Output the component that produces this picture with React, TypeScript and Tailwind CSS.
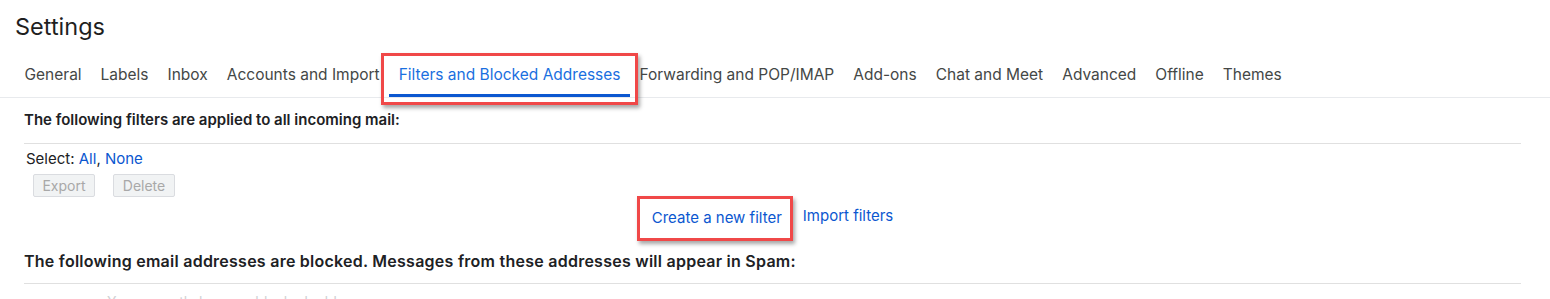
import React from "react";

const tabs = [
  "General",
  "Labels",
  "Inbox",
  "Accounts and Import",
  "Filters and Blocked Addresses",
  "Forwarding and POP/IMAP",
  "Add-ons",
  "Chat and Meet",
  "Advanced",
  "Offline",
  "Themes",
];

const ACTIVE = "Filters and Blocked Addresses";

const App: React.FC = () => {
  return (
    <div className="h-[299px] overflow-hidden bg-white font-['Inter',sans-serif] text-[#202124]">
      {/* Title */}
      <h1 className="pl-[15px] pt-[12px] text-[23.5px] leading-[30px] font-normal text-[#1f1f1f]">
        Settings
      </h1>

      {/* Tabs */}
      <div className="mt-[17px] flex border-b border-[#e8eaed] pl-[15px]">
        {tabs.map((t) => {
          const active = t === ACTIVE;
          return (
            <div key={t} className="relative">
              <button
                className={
                  active
                    ? "h-[38px] border-b-[3px] border-[#0b57d0] px-[9.5px] pb-[3px] text-[15.5px] text-[#1a6fe0]"
                    : "h-[38px] border-b-[3px] border-transparent px-[9.5px] pb-[3px] text-[15.5px] text-[#444746]"
                }
              >
                {t}
              </button>
              {active && (
                <span className="pointer-events-none absolute -left-[8px] -right-[8px] -top-[6px] bottom-[-8px] border-[3px] border-[#f04848] shadow-[2px_3px_4px_rgba(0,0,0,0.35)]" />
              )}
            </div>
          );
        })}
      </div>

      {/* Filters section */}
      <div className="pl-[24px] pr-[29px] text-[15px]">
        <div className="flex h-[46px] items-center border-b border-[#e0e0e0] font-semibold text-[#202124]">
          The following filters are applied to all incoming mail:
        </div>
        <div className="pl-[2px] pt-[5px] leading-[20px] text-[#202124]">
          Select: <a className="text-[#0b57d0]">All</a>,{" "}
          <a className="text-[#0b57d0]">None</a>
        </div>
        <div className="mt-[5px] flex gap-[18px] pl-[9px]">
          <button className="h-[23px] w-[62px] rounded-[2px] border border-[#dadce0] bg-[#f1f3f4] text-[14px] text-[#a8a8a8]">
            Export
          </button>
          <button className="h-[23px] w-[62px] rounded-[2px] border border-[#dadce0] bg-[#f1f3f4] text-[14px] text-[#a8a8a8]">
            Delete
          </button>
        </div>
        <div className="mt-[10px] flex justify-center gap-[21px] text-[#0b57d0]">
          <div className="relative">
            <a className="leading-[18px]">Create a new filter</a>
            <span className="pointer-events-none absolute -left-[15px] -right-[11px] -top-[11px] -bottom-[11px] border-[3px] border-[#f04848] shadow-[2px_3px_4px_rgba(0,0,0,0.35)]" />
          </div>
          <a className="leading-[18px]">Import filters</a>
        </div>
        <div className="mt-[12px] flex h-[42px] items-center border-b border-[#e0e0e0] pb-[2px] text-[16px] tracking-[0.25px] font-semibold text-[#202124]">
          The following email addresses are blocked. Messages from these addresses will appear in Spam:
        </div>
        <div className="pl-[83px] pt-[7px] text-[14px] text-[#d0d2d4]">
          You currently have no blocked addresses.
        </div>
      </div>
    </div>
  );
};

export default App;
